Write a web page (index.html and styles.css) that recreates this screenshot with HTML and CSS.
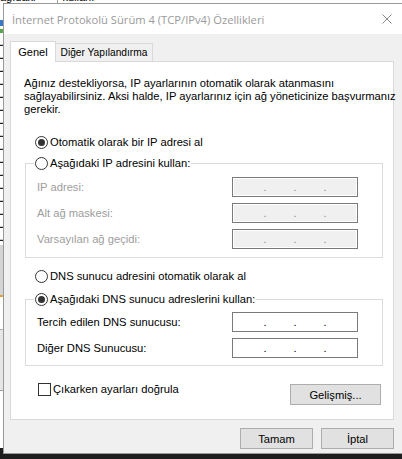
FILE: index.html
```html
<!DOCTYPE html>
<html lang="tr">
<head>
  <meta charset="UTF-8" />
  <title>İnternet Protokolü Sürüm 4 (TCP/IPv4) Özellikleri</title>
  <link rel="stylesheet" href="styles.css">
</head>
<body>
  <div class="desk">
    <div class="bgwin">
      <div class="bg-caption"><span>ağıdaki</span><span class="bg-sep"></span><span>kullan:</span></div>
      <div class="bg-list">
        <div class="seg seg-white"></div>
        <div class="seg seg-icon"></div>
        <div class="seg seg-lines"></div>
        <div class="seg seg-gray"></div>
        <div class="seg seg-white2"></div>
        <div class="seg seg-light"></div>
        <div class="seg seg-rest"></div>
      </div>
    </div>
    <div class="taskbar"></div>

    <div class="dialog">
      <div class="titlebar">
        <span class="title">İnternet Protokolü Sürüm 4 (TCP/IPv4) Özellikleri</span>
        <span class="close">
          <svg width="10" height="10" viewBox="0 0 10 10"><path d="M0.5 0.5 L9.5 9.5 M9.5 0.5 L0.5 9.5" stroke="#8a8a8a" stroke-width="1" fill="none"/></svg>
        </span>
      </div>

      <div class="dlg-body">
        <div class="tabs">
          <div class="tab active">Genel</div>
          <div class="tab">Diğer Yapılandırma</div>
        </div>

        <div class="panel">
          <p class="intro">Ağınız destekliyorsa, IP ayarlarının otomatik olarak atanmasını<br>sağlayabilirsiniz. Aksi halde, IP ayarlarınız için ağ yöneticinize başvurmanız<br>gerekir.</p>

          <div class="radio checked first"><span class="circle"></span>Otomatik olarak bir IP adresi al</div>

          <fieldset class="group">
            <legend><span class="radio"><span class="circle"></span>Aşağıdaki IP adresini kullan:</span></legend>
            <div class="field-row disabled"><span>IP adresi:</span><span class="ipbox"><i>.</i><i>.</i><i>.</i></span></div>
            <div class="field-row disabled"><span>Alt ağ maskesi:</span><span class="ipbox"><i>.</i><i>.</i><i>.</i></span></div>
            <div class="field-row disabled"><span>Varsayılan ağ geçidi:</span><span class="ipbox"><i>.</i><i>.</i><i>.</i></span></div>
          </fieldset>

          <div class="radio dns-auto"><span class="circle"></span>DNS sunucu adresini otomatik olarak al</div>

          <fieldset class="group group-dns">
            <legend><span class="radio checked"><span class="circle"></span>Aşağıdaki DNS sunucu adreslerini kullan:</span></legend>
            <div class="field-row"><span>Tercih edilen DNS sunucusu:</span><span class="ipbox"><i>.</i><i>.</i><i>.</i></span></div>
            <div class="field-row"><span>Diğer DNS Sunucusu:</span><span class="ipbox"><i>.</i><i>.</i><i>.</i></span></div>
          </fieldset>

          <div class="bottom-row">
            <div class="check"><span class="box"></span>Çıkarken ayarları doğrula</div>
            <button class="btn btn-adv">Gelişmiş...</button>
          </div>
        </div>

        <div class="actions">
          <button class="btn">Tamam</button>
          <button class="btn">İptal</button>
        </div>
      </div>
    </div>
  </div>
</body>
</html>
```

FILE: styles.css
```css
body { margin: 0; font-family: "Liberation Sans", Arial, sans-serif; font-size: 11.2px; color: #000; }
.desk { position: relative; width: 402px; height: 459px; overflow: hidden; display: flex; flex-direction: column; background: #fff; }

/* window behind the dialog */
.bgwin { flex: 1; display: flex; flex-direction: column; }
.bg-caption { height: 3px; overflow: hidden; font-size: 11px; line-height: 11px; white-space: nowrap; display: flex; }
.bg-caption span { margin-top: -8px; }
.bg-caption .bg-sep { width: 1px; height: 11px; background: #a0a0a0; margin: 0 4px 0 22px; }
.bg-list { width: 3px; flex: 1; display: flex; flex-direction: column; }
.seg-white { height: 17px; }
.seg-icon { height: 13px; background: linear-gradient(#3a78c8 0 45%, #fff 45% 70%, #5aa64a 70%); }
.seg-lines { height: 212px; background: repeating-linear-gradient(#fff 0 11px, #c8c8c8 11px 12px, #222 12px 13px); }
.seg-gray { height: 50px; background: #d4d4d4; }
.seg-white2 { height: 32px; background: #fff; border-top: 2px solid #e0a040; }
.seg-light { height: 60px; background: #e6e6e6; border-top: 1px solid #b0b0b0; }
.seg-rest { flex: 1; border-top: 1px solid #a0a0a0; }
.taskbar { height: 11px; background: #1e1e1e; }

/* dialog window */
.dialog { position: absolute; left: 3px; top: 3px; width: 408px; height: 451px; box-sizing: border-box; border: 1px solid #9a9a9a; background: #f0f0f0; display: flex; flex-direction: column; }
.titlebar { height: 30px; background: #fff; display: flex; align-items: center; justify-content: space-between; }
.title { padding-left: 8px; font-family: "Open Sans", "Noto Sans", sans-serif; font-size: 11.2px; color: #9a9a9a; }
.close { width: 46px; height: 30px; display: flex; align-items: center; justify-content: center; }
.close svg { display: block; }

.dlg-body { padding: 7px 16px 0 6px; }
.tabs { display: flex; align-items: flex-end; height: 20px; }
.tab { flex: 0 0 auto; min-width: 0; height: 18px; box-sizing: border-box; padding-top: 2px; border: 1px solid #d9d9d9; border-bottom: none; border-left: none; background: #f0f0f0; text-align: center; font-size: 11px; line-height: 14px; white-space: nowrap; overflow: hidden; }
.tab.active { position: relative; z-index: 1; width: 46px; height: 21px; margin-bottom: -1px; padding-top: 3px; border-left: 1px solid #d9d9d9; background: #fff; }
.tab:not(.active) { width: 97px; font-size: 10.2px; }

.panel { height: 359px; box-sizing: border-box; border: 1px solid #d9d9d9; background: #fff; padding-top: 15px; }
.intro { margin: 0 0 0 13px; line-height: 13px; white-space: nowrap; }

.radio { display: flex; align-items: center; height: 13px; line-height: 13px; white-space: nowrap; }
.radio .circle { width: 13px; height: 13px; box-sizing: border-box; border: 1px solid #333; border-radius: 50%; background: #fff; margin-right: 2px; display: flex; align-items: center; justify-content: center; }
.radio.checked .circle::after { content: ""; width: 7px; height: 7px; border-radius: 50%; background: #333; }
.radio.first { margin: 20px 0 0 24px; }
.radio.dns-auto { margin: 12px 0 0 24px; }

.group { margin: 8px 0 0 14px; width: 358px; box-sizing: border-box; border: 1px solid #dcdcdc; padding: 7px 24px 8px 8px; min-width: 0; }
.group legend { padding: 0 1px; margin: 0; }
.group-dns { margin-top: 10px; padding-top: 6px; padding-bottom: 7px; }

.field-row { display: flex; align-items: center; justify-content: space-between; height: 20px; margin-left: 3px; }
.field-row + .field-row { margin-top: 6px; }
.field-row.disabled { color: #9d9d9d; }

.ipbox { width: 126px; height: 20px; box-sizing: border-box; border: 1px solid #7a7a7a; background: #fff; display: flex; justify-content: center; font-size: 11px; line-height: 18px; }
.ipbox i { font-style: normal; width: 30px; text-align: center; }
.disabled .ipbox { background: #f0f0f0; box-shadow: inset 0 0 0 1px #fff; color: #8a8a8a; }

.bottom-row { display: flex; justify-content: space-between; align-items: flex-start; margin: 17px 12px 0 27px; }
.check { display: flex; align-items: center; height: 13px; line-height: 13px; }
.check .box { width: 13px; height: 13px; box-sizing: border-box; border: 1px solid #333; background: #fff; margin-right: 2px; }

.btn { font-family: inherit; font-size: 11.2px; color: #000; background: #e1e1e1; border: 1px solid #adadad; padding: 0; height: 21px; width: 73px; box-sizing: border-box; }
.btn-adv { width: 91px; margin-top: 1px; }
.actions { display: flex; justify-content: flex-end; gap: 8px; margin-top: 8px; }
```
